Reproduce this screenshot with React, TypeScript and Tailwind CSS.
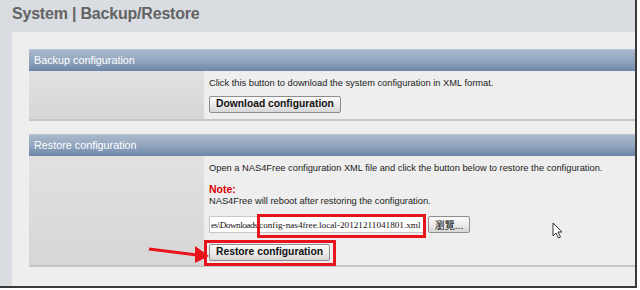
import React from 'react';

const font = { fontFamily: '"Liberation Sans", Arial, sans-serif' };

const SectionHeader = ({ title }: { title: string }) => (
  <div className="h-[22px] flex items-center pl-[5px] text-white text-[10.8px] bg-gradient-to-b from-[#a9b8cc] via-[#93a6bf] to-[#6c86a8] border-t border-[#b9c6d6]">
    {title}
  </div>
);

const Button = ({ children }: { children: React.ReactNode }) => (
  <button className="h-[17px] px-[6px] text-[10.3px] font-bold text-[#111] rounded-[2px] border border-[#8e8e8e] bg-gradient-to-b from-[#fafafa] via-[#ececec] to-[#d6d6d6] leading-none">
    {children}
  </button>
);

export default function App() {
  return (
    <div className="w-[640px] h-[290px] bg-white overflow-hidden" style={font}>
      <div className="w-[637px] h-[288px] flex flex-col bg-[#d9dce1] border-r-[2px] border-b-[2px] border-[#3a3a3a] relative">
        {/* title */}
        <div className="h-[32px] pl-[12px] pt-[4px] text-[16px] leading-[20px] font-bold text-[#636363] tracking-[-0.2px]">
          System | Backup/Restore
        </div>

        {/* content panel */}
        <div className="flex-1 ml-[12px] bg-[#eeeeee] pt-[17px] pl-[17px] text-[#222]">
          <SectionHeader title="Backup configuration" />
          <div className="flex h-[50px] border-b-2 border-[#c6c6c6]">
            <div className="w-[175px] bg-gradient-to-b from-[#e1e1e1] to-[#d6d6d6]" />
            <div className="flex-1 pl-[5px] pt-[6px] text-[9.3px] leading-[12px]">
              <div>Click this button to download the system configuration in XML format.</div>
              <div className="mt-[7px] flex">
                <Button>Download configuration</Button>
              </div>
            </div>
          </div>

          <div className="h-[13px]" />
          <SectionHeader title="Restore configuration" />
          <div className="flex h-[111px] border-b-2 border-[#c6c6c6]">
            <div className="w-[175px] bg-gradient-to-b from-[#e1e1e1] to-[#d6d6d6]" />
            <div className="flex-1 pl-[5px] pt-[6px] text-[9.3px] leading-[12px]">
              <div>Open a NAS4Free configuration XML file and click the button below to restore the configuration.</div>
              <div className="mt-[9px] text-[#dd0000] font-bold text-[10.5px]">Note:</div>
              <div>NAS4Free will reboot after restoring the configuration.</div>
              <div className="mt-[9px] flex items-center gap-[2px]">
                <div
                  className="w-[217px] h-[17px] bg-white border border-[#c8c8c8] flex items-center pl-[1px] text-[9.2px] text-[#111] overflow-hidden whitespace-nowrap"
                  style={{ fontFamily: '"Liberation Serif", "Times New Roman", serif' }}
                >
                  <span className="tracking-[-0.5px]">es\Downloads\</span>
                  <span>config-nas4free.local-20121211041801.xml</span>
                </div>
                <button
                  className="h-[17px] w-[42px] text-[10px] text-[#111] rounded-[2px] border border-[#8e8e8e] bg-gradient-to-b from-[#fafafa] via-[#ececec] to-[#d6d6d6] leading-none"
                  style={{ fontFamily: '"Noto Sans CJK TC", "Liberation Sans", sans-serif' }}
                >
                  瀏覽...
                </button>
              </div>
              <div className="mt-[11px] flex">
                <div className="relative">
                  <Button>Restore configuration</Button>
                  <span className="absolute -left-[5px] -right-[6px] -top-[4px] -bottom-[5px] border-[3px] border-[#e8141b]" />
                </div>
              </div>
            </div>
          </div>
        </div>

        {/* annotations */}
        <span className="absolute left-[257px] top-[214px] w-[169px] h-[24px] border-[3px] border-[#e8141b]" />
        <svg className="absolute left-[145px] top-[242px]" width="70" height="24" viewBox="0 0 70 24">
          <line x1="4" y1="7" x2="52" y2="13" stroke="#e8141b" strokeWidth="3" />
          <polygon points="50,4 64,14 50,21" fill="#e8141b" />
        </svg>
        <svg className="absolute left-[552px] top-[222px]" width="12" height="18" viewBox="0 0 12 18">
          <path d="M1 1 L1 14 L4 11 L6.5 16 L8.5 15 L6 10 L10 10 Z" fill="#fff" stroke="#333" strokeWidth="1" strokeLinejoin="round" />
        </svg>
      </div>
    </div>
  );
}
